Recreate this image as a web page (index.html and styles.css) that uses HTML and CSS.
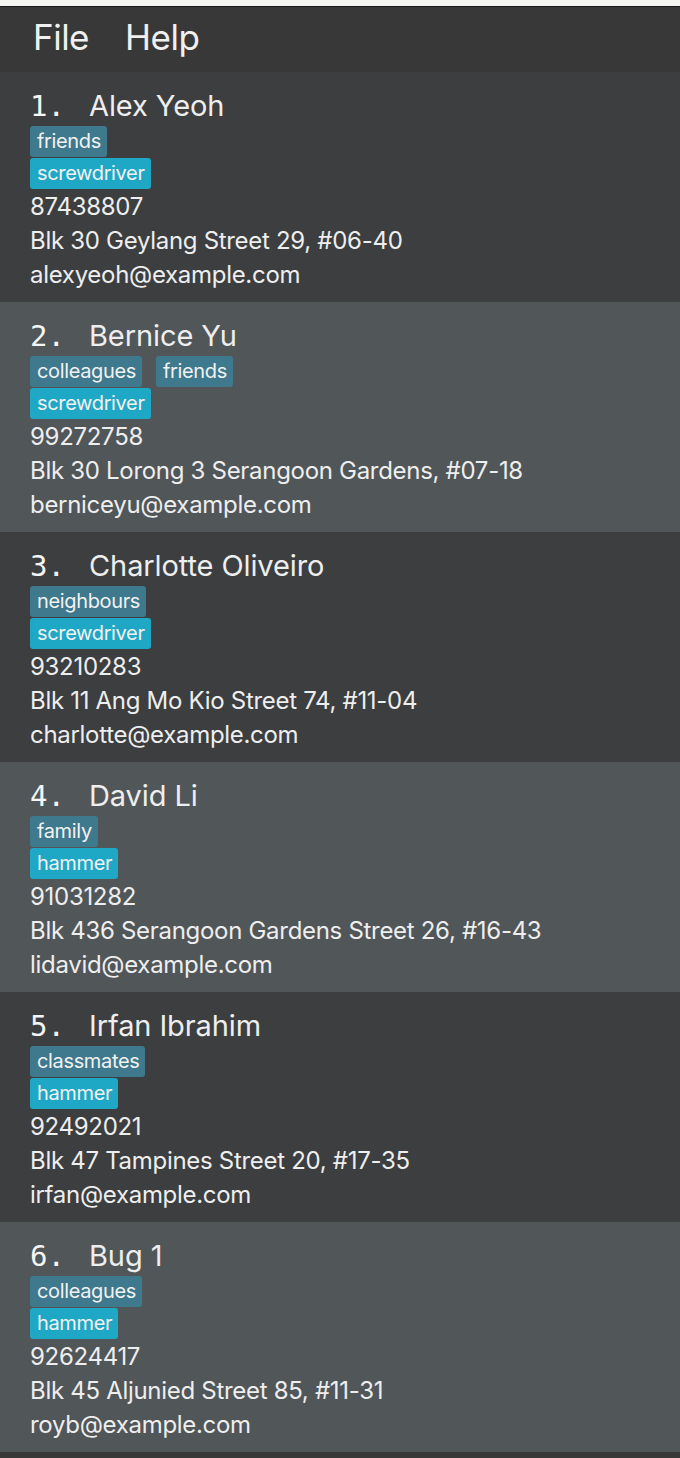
FILE: index.html
```html
<!DOCTYPE html>
<html>
<head>
<meta charset="utf-8">
<link rel="stylesheet" href="styles.css">
</head>
<body>
<div class="topstrip"></div>
<div class="menubar">
  <span class="menu">File</span>
  <span class="menu">Help</span>
</div>
<div class="list">
  <div class="card odd">
    <div class="title"><span class="idx">1.</span><span class="name">Alex Yeoh</span></div>
    <div class="tags"><span class="tag">friends</span></div>
    <div class="tags"><span class="tag tool">screwdriver</span></div>
    <div class="line">87438807</div>
    <div class="line">Blk 30 Geylang Street 29, #06-40</div>
    <div class="line">alexyeoh@example.com</div>
  </div>
  <div class="card even">
    <div class="title"><span class="idx">2.</span><span class="name">Bernice Yu</span></div>
    <div class="tags"><span class="tag">colleagues</span><span class="tag">friends</span></div>
    <div class="tags"><span class="tag tool">screwdriver</span></div>
    <div class="line">99272758</div>
    <div class="line">Blk 30 Lorong 3 Serangoon Gardens, #07-18</div>
    <div class="line">berniceyu@example.com</div>
  </div>
  <div class="card odd">
    <div class="title"><span class="idx">3.</span><span class="name">Charlotte Oliveiro</span></div>
    <div class="tags"><span class="tag">neighbours</span></div>
    <div class="tags"><span class="tag tool">screwdriver</span></div>
    <div class="line">93210283</div>
    <div class="line">Blk 11 Ang Mo Kio Street 74, #11-04</div>
    <div class="line">charlotte@example.com</div>
  </div>
  <div class="card even">
    <div class="title"><span class="idx">4.</span><span class="name">David Li</span></div>
    <div class="tags"><span class="tag">family</span></div>
    <div class="tags"><span class="tag tool">hammer</span></div>
    <div class="line">91031282</div>
    <div class="line">Blk 436 Serangoon Gardens Street 26, #16-43</div>
    <div class="line">lidavid@example.com</div>
  </div>
  <div class="card odd">
    <div class="title"><span class="idx">5.</span><span class="name">Irfan Ibrahim</span></div>
    <div class="tags"><span class="tag">classmates</span></div>
    <div class="tags"><span class="tag tool">hammer</span></div>
    <div class="line">92492021</div>
    <div class="line">Blk 47 Tampines Street 20, #17-35</div>
    <div class="line">irfan@example.com</div>
  </div>
  <div class="card even">
    <div class="title"><span class="idx">6.</span><span class="name">Bug 1</span></div>
    <div class="tags"><span class="tag">colleagues</span></div>
    <div class="tags"><span class="tag tool">hammer</span></div>
    <div class="line">92624417</div>
    <div class="line">Blk 45 Aljunied Street 85, #11-31</div>
    <div class="line">royb@example.com</div>
  </div>
</div>
<div class="bottom"></div>
</body>
</html>
```
FILE: styles.css
```css
html, body {
  margin: 0;
  padding: 0;
  background: #383838;
}
body {
  font-family: Inter, "Open Sans", sans-serif;
  color: #eeeeee;
  width: 680px;
  height: 1458px;
  overflow: hidden;
}
.topstrip {
  height: 6px;
  background: #f5f6f1;
  border-bottom: 1px solid #1b1b1b;
}
.menubar {
  height: 65px;
  background: #383838;
  display: flex;
  align-items: center;
  gap: 36px;
  padding-left: 33px;
  box-sizing: border-box;
}
.menu {
  font-size: 35px;
  letter-spacing: -0.5px;
  color: #f0f0f0;
  line-height: 1;
  margin-top: -5px;
}
.card {
  height: 230px;
  box-sizing: border-box;
  padding: 14px 0 0 30px;
}
.odd { background: #3c3e40; }
.even { background: #515659; }
.title {
  display: flex;
  align-items: baseline;
  height: 40px;
  line-height: 40px;
}
.idx {
  font-family: "DejaVu Sans Mono", monospace;
  font-size: 29px;
  color: #f5f5f5;
  width: 59px;
}
.name {
  font-size: 29px;
  color: #eeeeee;
  letter-spacing: -0.1px;
}
.tags {
  display: flex;
  gap: 14px;
  height: 31px;
  margin-bottom: 1px;
}
.tag {
  background: #3e798d;
  color: #f2f2f2;
  font-size: 20px;
  letter-spacing: -0.35px;
  line-height: 31px;
  height: 31px;
  padding: 0 6px 0 7px;
  border-radius: 3px;
}
.tag.tool {
  background: #1fa8c5;
}
.line {
  font-size: 24px;
  letter-spacing: -0.3px;
  line-height: 34px;
  height: 34px;
  color: #eeeeee;
}
.bottom {
  height: 6px;
  background: #383838;
}
```
